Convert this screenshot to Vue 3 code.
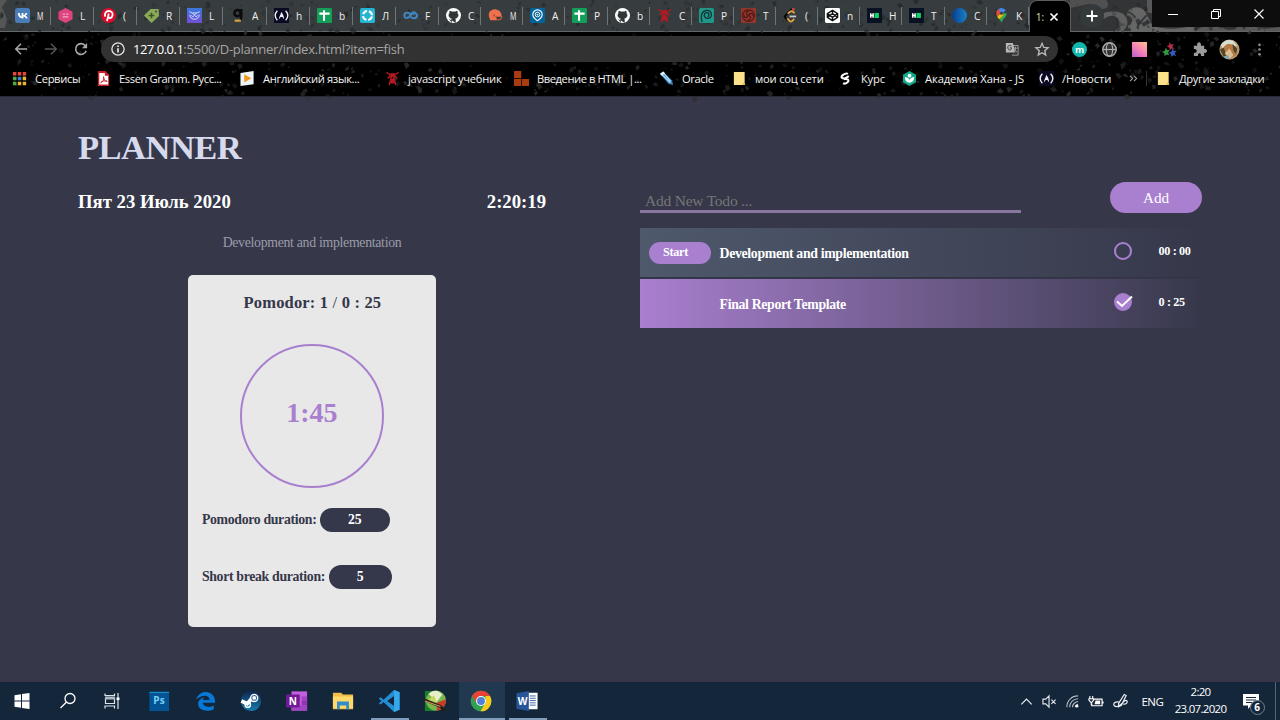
<script setup>
const icons = {
  vk: '<rect width="16" height="16" rx="3" fill="#4a7db8"/><path d="M3 5.200h2c.2 2.600 1.400 3.600 2 3.800V5.200h2v2.500c.9-.1 1.900-1.200 2.200-2.500h1.900c-.3 1.400-1.300 2.400-2 2.900.8.4 1.900 1.300 2.400 3h-2c-.4-1.200-1.300-1.900-2.500-2v2H8.300C5 11 3.200 8.900 3 5.200z" fill="#fff"/>',
  hexa: '<path d="M8 0l7.500 4v8L8 16 .5 12V4z" fill="#dd4480"/><path d="M5 6.500h2.500M8.500 6.500H11M5 9.500h6" stroke="#f3a9c5" stroke-width="1.300" fill="none"/>',
  pin: '<circle cx="8" cy="8" r="8" fill="#dc0b2b"/><path d="M4.700 9.300C3.300 6.300 5 3.200 8.400 3.200c2.800 0 4.400 2 3.900 4.500-.6 3.200-3.500 3.600-4.500 2M8.300 5.800l-1.900 8" stroke="#fff" stroke-width="1.900" fill="none"/>',
  tag: '<path d="M7 1l8.500 0 .5 7.500L8 16 0 8z" fill="#8aaa55"/><path d="M8 5v6M5 8h6" stroke="#3d5226" stroke-width="1.600"/><circle cx="12.800" cy="3.700" r="1" fill="#39433b"/>',
  owl: '<defs><linearGradient id="owl" x2="0" y2="1"><stop stop-color="#3978dc"/><stop offset="1" stop-color="#744dd5"/></linearGradient></defs><rect width="16" height="16" fill="url(#owl)"/><path d="M2.500 4l3 1.300h5l3-1.300M3 7c0 3 2 5 5 5s5-2 5-5M4.500 8q1.500 2.500 3.500 0q2 2.500 3.500 0M6 5.500l2 2 2-2" stroke="#d7e4ff" fill="none"/>',
  g: '<circle cx="8" cy="5.500" r="3.300" stroke="#0b0b0b" stroke-width="2.700" fill="none"/><path d="M12 1v9c0 1-.5 2-1.500 2" stroke="#0b0b0b" stroke-width="2.500" fill="none"/><path d="M5 13.500h6.500" stroke="#d6a63d" stroke-width="2.300"/>',
  fcc: '<rect width="16" height="16" fill="#0a0a23"/><path d="M3.600 3C.5 6 .5 10 3.600 13M12.400 3c3.100 3 3.100 7 0 10" stroke="#f2f2fa" stroke-width="1.500" fill="none"/><path d="M5.500 12c-.5-3 2-4 2-8 2.500 3 3.500 5.500 3 8L9 9.500H7z" fill="#f2f2fa"/>',
  cross: '<rect width="16" height="16" rx="1" fill="#129d58"/><path d="M2.500 6h11M7.500 2.500v11" stroke="#fff" stroke-width="2.200"/>',
  ring: '<rect width="16" height="16" rx="2" fill="#25b5d3"/><circle cx="8" cy="8" r="4.800" fill="none" stroke="#fff" stroke-width="2.200" stroke-dasharray="5.540 2" stroke-dashoffset="-1"/>',
  inf: '<path d="M13.500 5.500C11.500 3.500 9.500 5 8 8c-1.500 3-6.500 4-6.500 0s4.500-3.500 6.500-1M8.500 9.500c2 2.500 6.500 1.500 6.500-1.500-.5-3-3.500-3-5-1" fill="none" stroke="#4184bd" stroke-width="2.300"/>',
  git: '<circle cx="8" cy="8" r="8" fill="#fff"/><path d="M5.900 15.500v-2.700c-1.800.4-2.300-.6-2.700-1.300M5.900 12.800c.1-1 .4-1.300.6-1.500C2.300 10.500 2.600 6.500 4 5.300c-.3-.8-.1-1.600.1-2 1 0 1.600.5 2.200.9 1-.3 2.400-.3 3.400 0 .7-.5 1.400-.9 2.200-.9.300.7.300 1.400.1 2 1.700 2 1.300 5.300-2.500 6 .5.400.6 1 .6 1.600v2.600z" fill="#303638" stroke="#303638" stroke-width=".5"/>',
  helmet: '<path d="M1 9C0 3 5 1 8.500 1.500c4 .5 6 3.500 6 7H8l1.500 3L9 13H2.500z" fill="#ee714f"/><path d="M8 9h7M8.500 12.500H13l2-3" stroke="#ce5b3d" stroke-width="1.200" fill="none"/><circle cx="6.500" cy="8" r="1" fill="#a8462e"/>',
  aim: '<rect width="16" height="16" rx="2" fill="#02629b"/><path d="M8 13.500C4 11 3 9 3 7a5 5 0 0110 0c0 2-1 4-5 6.500z" fill="none" stroke="#fff" stroke-width="1.200"/><circle cx="8" cy="7" r="2.500" fill="none" stroke="#fff"/><circle cx="8" cy="7" r="1" fill="#fff"/>',
  tower: '<path d="M7 5L4.500 15M9 5l2.500 10M6 9h4M5 12.500h6M5.500 4L1.500 1.500M5.500 5L3 8M10.500 4l4-2.500M10.500 5L13 8" stroke="#b51923" stroke-width="1.500"/><path d="M5.500 2.500h5v4h-5zM6.500 8h3l1 4h-5z" fill="#b51923"/>',
  swirl: '<rect width="16" height="16" rx="2" fill="#209889"/><path d="M3.500 15C1 8 3 3 8 2.500c6-.3 7.500 8 1.500 8.500-5 0-5-6-1.400-6 3.400 0 3 4 1 4" stroke="#112f33" stroke-width="1.300" fill="none"/>',
  spiral: '<rect width="16" height="16" fill="#92352c"/><circle cx="8" cy="8" r="6.200" fill="none" stroke="#4a1715" stroke-width="1.200"/><path d="M8 8C4 6 6 3 9 3M8 8c4 1 2 5-1 5M8 8c2-4 5-2 5 1M8 8c-2 4-5 2-5-1" stroke="#4a1715" stroke-width="1.200" fill="none"/>',
  leet: '<path d="M9.500 1L2.500 8c-.8.800-.8 1.500 0 2.300L5 13" stroke="#090909" stroke-width="2.200" fill="none"/><path d="M5 6l2.500-2c1-.8 2-.8 3 0l2 1.500M4.500 11l2.500 2.700c1 1 2 1 3 0l2-2" stroke="#e5a443" stroke-width="1.900" fill="none"/><path d="M7 9h7" stroke="#c9c9c9" stroke-width="1.900"/><circle cx="11" cy="1.500" r="1.500" fill="#d84b31"/>',
  pen: '<rect width="16" height="16" rx="1.500" fill="#fff"/><path d="M8 2.500L13.500 6v4L8 13.500 2.500 10V6zM8 2.500V6M8 10v3.500M2.500 6L8 10l5.500-4M2.500 10L8 6l5.500 4" stroke="#111" stroke-width="1.400" fill="none"/>',
  hh: '<rect width="16" height="16" fill="#081223"/><path d="M4 5.500v5M6.500 5.500v5M4 8h3" stroke="#fff" stroke-width="1.600"/><path d="M8 5.300h4.700v5.400H8z" fill="#12d166"/>',
  ball: '<defs><linearGradient id="ball"><stop stop-color="#073e91"/><stop offset="1" stop-color="#1982c6"/></linearGradient></defs><circle cx="8" cy="8" r="8" fill="url(#ball)"/>',
  map: '<path d="M8 16C7 11 2.500 10 2.500 5.500h11C13.500 10 9 11 8 16z" fill="#34a853"/><path d="M2.500 6.500A5.500 5.500 0 015 1l3.500 3.500L3.500 9z" fill="#e9483b"/><path d="M5 1a5.500 5.500 0 017.500 1.500L8 7z" fill="#4285f4"/><path d="M3.500 9.500l5-5 2 2.500-5 5z" fill="#fbbc04"/><circle cx="8" cy="5.500" r="1.800" fill="#39473f"/>',
  apps: '<path d="M1 1h3.700v3.700H1zM6.200 1h3.700v3.700H6.200zM11.400 1h3.700v3.700h-3.700z" fill="#e3483a"/><path d="M1 6.200h3.700v3.700H1zM1 11.400h3.700v3.700H1z" fill="#55a646"/><path d="M6.200 6.200h3.700v3.700H6.200z" fill="#3f85d8"/><path d="M11.400 6.200h3.700v3.700h-3.700zM6.200 11.400h3.700v3.700H6.200zM11.400 11.400h3.700v3.700h-3.700z" fill="#ecb235"/>',
  pdf: '<path d="M2 0h8l4 4v12H2z" fill="#cf1f27"/><path d="M3.500 2h6v3H13v9.500H3.500z" fill="#fff"/><path d="M5 12.500c3-1 4-4 3-6.500 0 3.500 2 5 4 5-3-1-5.500-.5-7 1.500z" stroke="#d21f28" stroke-width="1" fill="none"/>',
  play: '<path d="M.5 2L14.500 0v14L.5 16z" fill="#edf5fb"/><path d="M4.500 3.500l7.500 4.300-7.500 4.500z" fill="#f5961d"/>',
  blocks: '<path d="M0 0h7.800v7.800H0zM0 8.500h7.800V16H0zM8.500 8.500H16V16H8.500z" fill="#a83b10"/>',
  pencil: '<path d="M1 3l3.500-2.500L14 10l1 5-5-1.500z" fill="#3c83c1"/><path d="M3 3.500l9 9M4.500 2l8 9" stroke="#bfe4fa" stroke-width="1.100"/><path d="M1 3l3.500-2.500L6.500 2.500 3 5z" fill="#ecf0f2"/>',
  note: '<path d="M2 1h11.500v13L12 15H2z" fill="#fce18b"/><path d="M11.500 15v-2.500l2.500.8V15z" fill="#e4b940"/>',
  course: '<path d="M10.500 3C8 1.500 1.500 6 4.500 7.500l6 1.500C13 11 8 14.500 5.500 13M6 9l5.500-3.500" stroke="#fff" stroke-width="2.200" fill="none"/>',
  khan: '<path d="M8 0l7 4v8l-7 4-7-4V4z" fill="#12a889"/><circle cx="8" cy="5" r="2" fill="#fff"/><path d="M3 6.500c2 0 4 1 5 3 1-2 3-3 5-3 0 4-2 6-5 6s-5-2-5-6z" fill="#fff"/>',
  back: '<path d="M15 8H2M8 2L2 8l6 6" fill="none" stroke="#aaa" stroke-width="1.700"/>',
  forward: '<path d="M1 8h13M8 2l6 6-6 6" fill="none" stroke="#555" stroke-width="1.700"/>',
  reload: '<path d="M13 4.200A6.200 6.200 0 1014 10" fill="none" stroke="#aaa" stroke-width="1.800"/><path d="M15 1v6H9z" fill="#aaa"/>',
  info: '<circle cx="8" cy="8" r="7" fill="none" stroke="#e2e2e2" stroke-width="1.500"/><path d="M8 7v5M8 4v1.700" stroke="#e2e2e2" stroke-width="2"/>',
  star: '<path d="M8 1.500l2 4.700 5 .4-3.900 3.300 1.200 5L8 12.200l-4.300 2.700 1.200-5L1 6.600l5-.4z" fill="none" stroke="#bbb" stroke-width="1.500"/>',
  puzzle: '<path d="M2 4h3.500c-1-5 5-5 4 0H13v3.500c4-1 4 5 0 4V15H9.500c1-4-4-4-3 0H2v-3.500c4 1 4-5 0-4z" fill="#9b9b9b"/>',
}
const tabs = [['vk','M'],['hexa','L'],['pin','('],['tag','R'],['owl','L'],['g','A'],['fcc','h'],['cross','b'],['ring','Л'],['inf','F'],['git','C'],['helmet','M'],['aim','A'],['cross','P'],['git','b'],['tower','C'],['swirl','P'],['spiral','T'],['leet','('],['pen','n'],['hh','H'],['hh','T'],['ball','C'],['map','K']]
// icon, label, item width, label letter-spacing
const bookmarks = [
  ['apps','Сервисы',84,-.35],['pdf','Essen Gramm. Русс...',144,-.4],['play','Английский язык...',145,-.35],['tower','javascript учебник',129,-.25],
  ['blocks','Введение в HTML |...',145,-.45],['pencil','Oracle',73,-.4],['note','мои соц сети',106,-.2],['course','Курс',64,-.2],['khan','Академия Хана - JS',137,-.1],['fcc','/Новости',88,-.1],
]
let seed = 77
const rnd = () => (seed = (seed * 16807) % 2147483647) / 2147483647
const specks = Array.from({ length: 900 }, () => {
  const x = rnd() * 1280, y = rnd() * 96, r = 1 + rnd() * 3
  return { d: `M${x} ${y}l${r} ${-r * rnd()}l${r * rnd()} ${r}l${-r} ${r * rnd()}z`, o: .3 + rnd() * .6, top: y < 31 }
})
</script>

<template>
  <div class="screen">
    <header class="browser">
      <svg class="texture" viewBox="0 0 1280 97">
        <path v-for="(s, i) in specks" :key="i" :d="s.d" :fill="s.top ? '#25292b' : '#2d2d2d'" :opacity="s.o" />
      </svg>
      <div class="tabstrip">
        <svg class="damask" viewBox="0 0 210 31">
          <path d="M0 0h36c4 4 2 9-3 9-8 0-8-4-14-5L0 8z" fill="#505050" />
          <path d="M32 14c8-4 20-3 24 3 3 6 1 10-3 14h-8c6-6 6-13-1-15-6-1-8 3-12 3z" fill="#606060" />
          <path d="M57 14c8 1 9 12 1 13" fill="none" stroke="#5a5a5a" stroke-width="3" />
          <path d="M58 11c5-5 12-5 17 0l7 14c9 5 27 5 43 0v6H61c-2-6 1-10 5-14-2-3-5-5-8-6z" fill="#666" />
          <path d="M77 0h15l-3 9c8 3 22 3 34 0v4c-16 4-36 3-46-1z" fill="#585858" />
          <path d="M67 28c2-5 6-9 10-13M80 17c6 4 18 6 35 4" stroke="#3a3a3a" stroke-width="2" fill="none" />
          <path d="M126 31q9-9 25-4q9 6 17 0q12-5 26 2l16-2v4z" fill="#585858" />
        </svg>
        <svg class="corner" viewBox="0 0 8 31"><path d="M0 0h7L2 7l5 12-2 9H0z" fill="#555" /></svg>
        <div v-for="(t, i) in tabs" :key="i" class="tab" :class="{ late: i > 9 }">
          <svg class="fav" viewBox="0 0 16 16" v-html="icons[t[0]]" /><span :class="{ slim: t[1] === 'M' }">{{ t[1] }}</span>
        </div>
        <div class="tab active"><span>1:</span><svg viewBox="0 0 8 8"><path d="M.5.500l7 7M7.500.500l-7 7" stroke="#fff" stroke-width="1.700" /></svg></div>
        <svg class="plus" viewBox="0 0 24 24"><circle cx="12" cy="12" r="12" fill="#343a3b" /><path d="M12 6.500v11M6.500 12h11" stroke="#fff" stroke-width="1.900" /></svg>
        <div class="controls">
          <svg viewBox="0 0 12 12"><path d="M1 6.500h10" stroke="#fff" /></svg>
          <svg viewBox="0 0 12 12"><path d="M1.500 3.500h7v7h-7zM3.500 3V1.500h7v7H9" fill="none" stroke="#fff" /></svg>
          <svg viewBox="0 0 12 12"><path d="M1.500 1.500l9 9M10.500 1.500l-9 9" stroke="#fff" stroke-width="1.100" /></svg>
        </div>
      </div>
      <div class="toolbar">
        <div class="tool"><svg viewBox="0 0 16 16" v-html="icons.back" /></div>
        <div class="tool"><svg viewBox="0 0 16 16" v-html="icons.forward" /></div>
        <div class="tool"><svg viewBox="0 0 16 16" v-html="icons.reload" /></div>
        <div class="omnibox">
          <svg viewBox="0 0 16 16" v-html="icons.info" />
          <p class="url"><b>127.0.0.1</b>:5500/D-planner/index.html?item=fish</p>
          <svg class="translate" viewBox="0 0 16 16"><path d="M1 1h8l3 11H1z" fill="#b8b8b8" /><path d="M9 4h6v11H8" fill="none" stroke="#aaa" /><path d="M9.500 7h5M12 5.500V7c0 2-1 3.500-2 4M10.500 8l3.500 4" stroke="#aaa" /><path d="M7.500 4.500c-3-2-5 .5-4 3s4 2 4-.8H5.500" stroke="#333" stroke-width="1.100" fill="none" /></svg>
          <svg viewBox="0 0 16 16" v-html="icons.star" />
        </div>
        <div class="tool"><svg viewBox="0 0 16 16"><circle cx="8" cy="8" r="8" fill="#12b5ac" /><text x="8" y="11.300" text-anchor="middle" class="m">m</text></svg></div>
        <div class="tool"><svg viewBox="0 0 16 16"><circle cx="8" cy="8" r="7.200" fill="#333" stroke="#aaa" stroke-width="1.500" /><ellipse cx="8" cy="8" rx="3.400" ry="7" fill="none" stroke="#aaa" stroke-width="1.300" /><path d="M1 8h14" stroke="#aaa" stroke-width="1.300" /></svg></div>
        <div class="tool"><i class="swatch" /></div>
        <div class="tool"><svg viewBox="0 0 16 16"><path d="M8 0l1.600 2.600 3-.5L11 5l2 2.500-3-.5L8 9V6L5 4.500l2.700-1z" fill="#b92e49" /><path d="M4 6l1.500 2.500H8l-1.500 3L8 14l-3-.8L2.500 15v-3L0 10.500l3-1.300z" fill="#2e993f" /><path d="M11.500 7l1 2.700 3-.2-2 2.500 1.500 3-3-1-2.500 2 .2-3L7 11.500l3-1z" fill="#3559c1" /></svg></div>
        <div class="tool"><svg viewBox="0 0 16 16" v-html="icons.puzzle" /></div>
        <div class="tool"><svg class="avatar" viewBox="0 0 22 22"><circle cx="11" cy="11" r="10.500" fill="#b99a6c" /><path d="M2 6q5-7 13-4l4 5-5 1-5-3-5 6z" fill="#d9ded2" /><path d="M5 8q6-6 11 0l2 9-7 4-6-5z" fill="#b77a43" /><path d="M1 11l4-2 3 9-3 1zM14 5l5 5-1 6-3-4z" fill="#50452c" /><path d="M6 15l5-5 4 7-4 4z" fill="#e0bd91" /><path d="M5 18l5-1 1 4-4-1z" fill="#72adc5" /></svg></div>
        <div class="tool dots"><svg viewBox="0 0 16 16"><circle cx="8" cy="3" r="1.400" fill="#909090" /><circle cx="8" cy="8" r="1.400" fill="#909090" /><circle cx="8" cy="13" r="1.400" fill="#909090" /></svg></div>
      </div>
      <div class="bookmarks">
        <div v-for="b in bookmarks" :key="b[1]" class="bm" :style="{ width: b[2] + 'px', letterSpacing: b[3] + 'px' }">
          <svg viewBox="0 0 16 16" v-html="icons[b[0]]" /><span>{{ b[1] }}</span>
        </div>
        <svg class="more" viewBox="0 0 10 8"><path d="M1 1l3 3-3 3M5.500 1l3 3-3 3" fill="none" stroke="#aaa" stroke-width="1.200" /></svg>
        <div class="bm last"><svg viewBox="0 0 16 16" v-html="icons.note" /><span>Другие закладки</span></div>
      </div>
    </header>

    <main class="page">
      <section class="left">
        <h1>PLANNER</h1>
        <div class="date"><span>Пят 23 Июль 2020</span><span>2:20:19</span></div>
        <p class="current">Development and implementation</p>
        <div class="card">
          <h2>Pomodor: 1 <span>/</span> 0 : 25</h2>
          <div class="dial">1:45</div>
          <div class="setting"><label>Pomodoro duration:</label><b class="wide">25</b></div>
          <div class="setting"><label>Short break duration:</label><b>5</b></div>
        </div>
      </section>
      <section class="right">
        <form class="entry" @submit.prevent>
          <input type="text" placeholder="Add New Todo ..." />
          <button>Add</button>
        </form>
        <div class="todo">
          <div class="action"><button>Start</button></div>
          <span class="name">Development and implementation</span>
          <svg class="check" viewBox="0 0 20 20"><circle cx="9" cy="10" r="8" fill="none" stroke="#a97fcf" stroke-width="2" /></svg>
          <span class="spent">00 : 00</span>
        </div>
        <div class="todo done">
          <div class="action" />
          <span class="name">Final Report Template</span>
          <svg class="check" viewBox="0 0 20 20"><circle cx="9" cy="10" r="9" fill="#a97fcf" /><path d="M3 9.500l5 4.500L18 4.500" fill="none" stroke="#fff" stroke-width="2" /></svg>
          <span class="spent">0 : 25</span>
        </div>
      </section>
    </main>

    <footer class="taskbar">
      <div class="cell"><svg viewBox="0 0 24 24"><path d="M4.500 6.200l6.500-1v6.300H4.500zM12 5l7.500-1v7.500H12zM4.500 12.500H11v6.300l-6.500-1zM12 12.500h7.500V20L12 19z" fill="#fff" /></svg></div>
      <div class="cell"><svg viewBox="0 0 24 24"><circle cx="14" cy="9.500" r="5" fill="none" stroke="#fff" stroke-width="1.300" /><path d="M10.300 13.200L4.500 19" stroke="#fff" stroke-width="1.300" /></svg></div>
      <div class="cell"><svg viewBox="0 0 24 24"><path d="M5 4.500v2h9.500v-2M5 19.500v-2.500h9.500v2.500M5.500 9.500h9v5h-9zM18 4v16" fill="none" stroke="#dde4e9" stroke-width="1.200" /><path d="M5 7.500h10v3H5z" fill="#aeb8c0" /><path d="M16.500 8.500h3V11h-3z" fill="#fff" /></svg></div>
      <div class="cell ps"><svg viewBox="0 0 24 24"><rect x="1.500" y="2" width="21.500" height="21" fill="#035395" /><path d="M1.500 2H23v1H1.500z" fill="#16a0d9" /><text x="12" y="15.500" text-anchor="middle" class="pstext">Ps</text></svg></div>
      <div class="cell"><svg viewBox="0 0 24 24"><path d="M1.500 10.500C4-1 22.500-1 22 14H8.500c.5 5 8 5.500 12 3v4C12 25 3 21.500 3.300 14.500 4 10.500 8 8.500 11 8 8.500 9 8.500 11 8.500 11H16C15.500 4.500 6.500 5 1.500 10.500z" fill="#0878d5" /></svg></div>
      <div class="cell"><svg viewBox="0 0 24 24"><defs><linearGradient id="steam" x2="0" y2="1"><stop stop-color="#102854" /><stop offset="1" stop-color="#1579ac" /></linearGradient></defs><circle cx="12" cy="12" r="11" fill="url(#steam)" /><path d="M1.500 12l6.500 3 5-6" stroke="#fff" stroke-width="4" fill="none" /><circle cx="15.500" cy="8.700" r="4.600" fill="#fff" /><circle cx="15.500" cy="8.700" r="2.600" fill="none" stroke="#39699b" stroke-width="1.100" /><circle cx="8.500" cy="16" r="2.900" fill="none" stroke="#fff" stroke-width="1.600" /></svg></div>
      <div class="cell"><svg viewBox="0 0 24 24"><path d="M6 1.500h17v21H6z" fill="#c45fdf" /><path d="M17 7h6v5h-6z" fill="#a442c2" /><path d="M17 12h6v5h-6z" fill="#9134af" /><path d="M6 17h17v5.500H6z" fill="#a045c1" /><rect x="0" y="5" width="15" height="14" rx="1" fill="#721a96" /><text x="7.500" y="16" text-anchor="middle" class="letter">N</text></svg></div>
      <div class="cell"><svg viewBox="0 0 24 24"><path d="M1 3h9l2 2h11v16H1z" fill="#f0bd49" /><path d="M1 7h22v13H1z" fill="#ffd969" /><path d="M5.500 21v-8.500h13V21h-3v-4h-7v4z" fill="#328cc9" /></svg></div>
      <div class="cell run"><svg viewBox="0 0 24 24"><path d="M17.500 0L23.500 2.500v19L17.500 24 6 13.200 3 15.800.8 14.500 4 12 .8 9.500 3 8l3 2.700zM17.500 6.500L10 12l7.500 5.500z" fill="#248ed5" fill-rule="evenodd" /><path d="M17.500 0l6 2.500v19l-6 2.500z" fill="#36a8ed" /></svg></div>
      <div class="cell"><svg viewBox="0 0 24 24"><path d="M1 1h11v22H1z" fill="#197d2e" /><circle cx="13" cy="11.500" r="11" fill="#79b84e" /><path d="M5 4q8-7 15 1l-6 8z" fill="#e8edcc" /><path d="M14 23q11-4 10-13l-10 4z" fill="#c83d27" /><path d="M2 12l9-6 3 8z" fill="#c2d760" /><path d="M1 11l17 7 5 5" stroke="#281d15" stroke-width="3" fill="none" /><path d="M1 12l17 6" stroke="#d29c61" stroke-width="1.200" /></svg></div>
      <div class="cell chrome"><svg viewBox="0 0 24 24"><circle cx="12" cy="12" r="11.300" fill="#33a152" /><path d="M2.200 6.400A11.300 11.300 0 0121.800 6.500H12L7.500 15z" fill="#e54335" /><path d="M21.800 6.500A11.300 11.300 0 0111.500 23.300L16.800 14V6.500z" fill="#fbc918" /><circle cx="12" cy="12" r="5.400" fill="#fff" /><circle cx="12" cy="12" r="4.300" fill="#4b82d8" /></svg></div>
      <div class="cell word"><svg viewBox="0 0 24 24"><path d="M12 3h11.500v18H12z" fill="#fff" /><path d="M15 6.500h6.500M15 9h6.500M15 11.500h6.500M15 14h6.500M15 16.500h6.500" stroke="#315d9f" /><path d="M.5 3.500L14 1v22L.5 20.500z" fill="#28559a" /><text x="7.300" y="16" text-anchor="middle" class="letter">W</text></svg></div>
      <div class="tray">
        <svg viewBox="0 0 16 16"><path d="M2.500 11L8 5.500l5.500 5.500" fill="none" stroke="#e5e9ed" stroke-width="1.300" /></svg>
        <svg viewBox="0 0 16 16"><path d="M1 5.500h3L7.500 2v12L4 10.500H1zM10 6l4.500 4.500M14.500 6L10 10.500" fill="none" stroke="#e5e9ed" stroke-width="1.200" /></svg>
        <svg viewBox="0 0 16 16"><path d="M2 14C2 7 7 2 14 2M5 14c0-5 4-9 9-9M8 14c0-3 3-6 6-6M11 14c0-1.500 1.500-3 3-3" stroke="#aeb8c1" stroke-width="1.200" fill="none" /><circle cx="12.700" cy="13" r="1.500" fill="#fff" /></svg>
        <svg viewBox="0 0 16 16"><path d="M5 5.500h10v7H4V10M16 8v2M2 2v3M5 2v3M1 5h5v1.500L4 9H3L1 6.500zM3.500 9v3" stroke="#fff" stroke-width="1.200" fill="none" /><path d="M8 7h5v4H7z" fill="#fff" /></svg>
        <svg viewBox="0 0 16 16"><path d="M6 10l6-9.500 2 1-5 10.500-3 1.500zM6 8.500c-6-1-7 5-2 5 6-1 8-9 11-6 1 2-2 4-4 3" fill="none" stroke="#e8edf2" stroke-width="1.300" /></svg>
        <span class="lang">ENG</span>
        <div class="clock"><span>2:20</span><span>23.07.2020</span></div>
        <div class="notice"><svg viewBox="0 0 16 16"><path d="M0 1h16v11.500H8L5 16v-3.500H0z" fill="#fff" /><path d="M3 4.500h10M3 7h10M3 9.500h6" stroke="#16283b" stroke-width="1.100" /></svg><i>6</i></div>
      </div>
    </footer>
  </div>
</template>

<style>
body { margin: 0; overflow: hidden; }
</style>
<style scoped>
* { box-sizing: border-box; }
svg { display: block; flex: none; overflow: visible; }
h1, h2, p { margin: 0; }
.screen { width: 1280px; height: 720px; display: flex; flex-direction: column; background: #36384a; overflow: hidden; font-family: "Open Sans", "Noto Sans", sans-serif; }
.browser { height: 97px; background: #000; position: relative; border-bottom: 1px solid #292a36; flex: none; }
.texture { position: absolute; inset: 0; width: 1280px; height: 97px; z-index: 1; pointer-events: none; }
.tabstrip { height: 32px; padding-left: 8px; display: flex; background: #373c3e; border-bottom: 1px solid #646769; position: relative; }
.damask { position: absolute; left: 1070px; top: 0; width: 210px; height: 31px; background: #323435; overflow: hidden; }
.corner { position: absolute; left: 0; top: 0; width: 8px; height: 31px; }
.tab { width: 43.1px; height: 31px; display: flex; align-items: center; padding-left: 7px; gap: 7px; position: relative; z-index: 2; color: #f0f0f0; font-size: 11.5px; flex: none; }
.tab.late { width: 42.15px; }
.tab::after { content: ""; position: absolute; right: 0; top: 7px; height: 18px; width: 1px; background: #707476; }
.tab span { white-space: nowrap; transform: scaleX(.88); transform-origin: left; }
.tab .slim { transform: scaleX(.62); }
.fav { width: 15px; height: 15px; }
.tab.active { width: 42px; height: 32px; background: #000; border: 1px solid #5b5d5e; border-bottom: 0; border-radius: 8px 8px 0 0; padding-left: 6px; gap: 5px; }
.tab.active::after { display: none; }
.tab.active span { width: 9px; color: #eee9bb; transform: scaleX(.82); }
.tab.active svg { width: 8px; height: 8px; }
.plus { width: 24px; height: 24px; margin: 4px 0 0 9px; position: relative; z-index: 2; }
.controls { margin-left: auto; width: 128px; height: 27px; display: flex; align-items: center; justify-content: space-around; background: #0d0d0d; position: relative; z-index: 2; }
.controls svg { width: 12px; height: 12px; }
.toolbar { height: 34px; padding-left: 6px; display: flex; align-items: center; position: relative; z-index: 2; }
.tool { width: 30px; display: flex; justify-content: center; flex: none; }
.tool svg { width: 15px; height: 15px; }
.tool:nth-child(-n+3) svg { width: 14px; height: 14px; }
.tool svg.avatar { width: 21px; height: 21px; }
.m { font: bold 10px "Open Sans", sans-serif; fill: #fff; }
.swatch { width: 15px; height: 15px; background: linear-gradient(215deg, #ffc18e, #f783b5 50%, #bb59ce); }
.omnibox { width: 957px; height: 26px; margin: 0 6px 0 5px; padding: 0 9px 0 10px; border-radius: 13px; background: #323232; display: flex; align-items: center; flex: none; }
.omnibox svg { width: 14px; height: 14px; }
.omnibox .translate { margin-left: auto; margin-right: 16px; }
.url { margin-left: 8px; font-size: 13px; line-height: 26px; color: #a5a5a5; letter-spacing: -.25px; }
.url b { font-weight: 400; color: #fff; letter-spacing: -.5px; }
.bookmarks { height: 26px; padding-left: 12px; display: flex; align-items: center; position: relative; z-index: 2; font-size: 11.200px; color: #f4f4f4; white-space: nowrap; margin-top: -1px; }
.bm { display: flex; align-items: center; gap: 8px; flex: none; }
.bm svg { width: 15px; height: 15px; }
.more { width: 9px; height: 7px; margin-left: 2px; }
.last { margin-left: 8px; padding-left: 9px; border-left: 1px solid #333; letter-spacing: -.35px; }

.page { height: 585px; flex: none; display: flex; padding-left: 78px; font-family: "Liberation Serif", "Times New Roman", serif; color: #fff; border-bottom: 2px solid #3b354a; }
.left { width: 562px; }
h1 { margin-top: 30px; font-size: 34.500px; line-height: 40px; color: #d7daed; letter-spacing: -.5px; }
.date { width: 468px; margin-top: 23px; display: flex; justify-content: space-between; font-size: 18.720px; line-height: 24px; font-weight: bold; }
.current { width: 468px; margin-top: 19px; text-align: center; font-size: 13.800px; line-height: 20px; color: #9b9ba8; letter-spacing: -.3px; }
.card { width: 248px; height: 352px; margin: 22px 0 0 110.400px; padding-left: 13.500px; background: #e8e8e8; border-radius: 5px; color: #35374a; display: flex; flex-direction: column; }
h2 { margin: 18px 0 0 -13.500px; text-align: center; font-size: 16.500px; line-height: 20px; letter-spacing: .18px; }
h2 span { font-weight: 400; }
.dial { width: 144px; height: 144px; margin: 31px 0 0 38px; border: 2px solid #a97fcf; border-radius: 50%; text-align: center; font-size: 28px; line-height: 134px; font-weight: bold; color: #a97fcf; }
.setting { height: 24px; margin-top: 20px; display: flex; align-items: center; gap: 3.700px; font-size: 13.800px; font-weight: bold; letter-spacing: -.33px; }
.setting + .setting { margin-top: 33px; }
.setting b { width: 63px; height: 24px; line-height: 24px; border-radius: 12px; background: #35374a; color: #fff; text-align: center; letter-spacing: 0; }
.setting .wide { width: 69.500px; }
.right { width: 562px; padding-top: 85px; }
.entry { display: flex; justify-content: space-between; height: 46px; }
input { width: 381px; height: 31px; padding: 9px 5px 0; margin: 0; background: none; border: 0; border-bottom: 3px solid #8a779f; font: 15.500px "Liberation Serif", serif; letter-spacing: -.22px; outline: none; }
input::placeholder { color: #757575; opacity: 1; }
button { border: 0; margin: 0; background: #a97fcf; color: #fff; font-family: inherit; }
.entry button { width: 92px; height: 31px; border-radius: 16px; font-size: 15.200px; padding: 0; }
.todo { height: 49.500px; display: flex; align-items: center; background: linear-gradient(90deg, #4f596c, #36384a00); font-weight: bold; border-bottom: 1px solid #313447; }
.todo + .todo { margin-top: 1px; border: 0; background: linear-gradient(90deg, #a97fcf, #36384a00); }
.action { width: 79.600px; padding-left: 9px; }
.action button { display: block; width: 61.500px; height: 22px; padding: 0 0 1px 14px; border-radius: 11px; text-align: left; font-size: 12.200px; font-weight: bold; letter-spacing: -.3px; margin-top: 1px; }
.name { width: 394.400px; font-size: 13.800px; padding-top: 3px; letter-spacing: -.34px; }
.check { width: 20px; height: 20px; margin-bottom: 3px; }
.spent { margin-left: 24.500px; font-size: 12.200px; letter-spacing: -.36px; padding-bottom: 1px; }

.taskbar { height: 38px; display: flex; background: #14263a; color: #fff; }
.cell { width: 45.900px; height: 38px; display: flex; align-items: center; justify-content: center; flex: none; padding-right: 2px; }
.cell svg { width: 22px; height: 22px; }
.cell:nth-child(-n+3) svg { width: 24px; height: 24px; }
.cell:nth-child(3) { padding-right: 5px; }
.cell.ps { padding-right: 4px; }
.pstext { font: bold 11px "Open Sans", sans-serif; fill: #75d2f5; }
.letter { font: bold 11px "Open Sans", sans-serif; fill: #fff; }
.cell:nth-child(n+9) { position: relative; }
.run::after, .chrome::after, .word::after { content: ""; position: absolute; left: 4px; right: 4px; bottom: 0; height: 2px; background: #809dbd; }
.chrome { background: #203850; }
.chrome::after { left: 0; right: 0; }
.tray { margin-left: auto; width: 261.500px; display: flex; align-items: center; position: relative; }
.tray > svg { width: 15px; height: 15px; margin-right: 8px; }
.tray > svg:nth-child(5) { margin-left: 2px; }
.lang { width: 22px; margin-left: 6px; font-size: 11.500px; letter-spacing: -.55px; }
.clock { width: 70px; margin-left: 2px; display: flex; flex-direction: column; align-items: center; font-size: 11.500px; line-height: 17px; letter-spacing: -.7px; margin-top: -2px; }
.notice { margin-left: 7px; position: relative; }
.notice svg { width: 16px; height: 16px; }
.notice i { position: absolute; left: 7px; top: 7px; width: 15px; height: 15px; border: 1px solid #728292; border-radius: 50%; background: #14263a; font: bold 10px/13px "Open Sans", sans-serif; text-align: center; }
.tray::after { content: ""; position: absolute; right: 4px; top: 0; width: 1px; height: 38px; background: #536474; }
</style>
